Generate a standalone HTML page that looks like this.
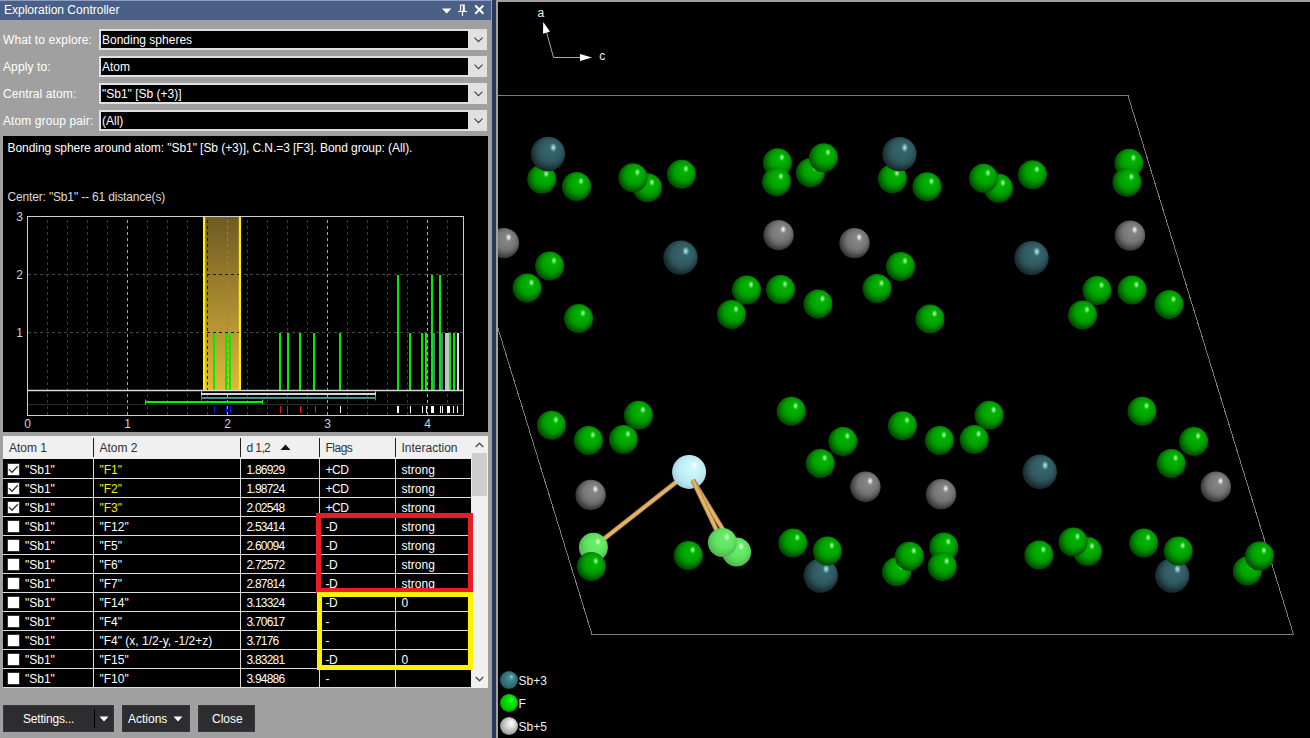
<!DOCTYPE html>
<html><head><meta charset="utf-8"><title>Exploration Controller</title>
<style>
html,body{margin:0;padding:0}
body{width:1310px;height:738px;overflow:hidden;background:#a0a0a0;position:relative;font-family:"Liberation Sans",sans-serif;font-size:12px;color:#fff}
div,span{box-sizing:border-box}
.abs{position:absolute}
#title{position:absolute;left:0;top:0;width:492px;height:20px;background:#4a5f85;border-top:1px solid #8e9dc5;border-right:1px solid #8e9dc5}
#title .t{position:absolute;left:4px;top:2px;line-height:14px;font-size:12px;color:#fff;white-space:nowrap}
#navy{position:absolute;left:492px;top:0;width:4px;height:738px;background:#283858}
#view{position:absolute;left:496px;top:0;width:814px;height:738px;background:#000;border-left:2px solid #a0a0a0;border-top:2px solid #a0a0a0;overflow:hidden}
svg.scene{position:absolute;left:0;top:0}
.gl{font-family:"Liberation Sans",sans-serif;font-size:12px;fill:#f0f0f0}
.lab{position:absolute;left:3px;letter-spacing:0.1px;line-height:14px;white-space:nowrap;color:#fff}
.combo{position:absolute;left:99px;width:388px;height:21px;background:#e1e1e1}
.combo .in{position:absolute;left:2px;top:2px;width:367px;height:17px;background:#000;color:#fff;line-height:19px;padding-left:1px;white-space:nowrap;overflow:hidden}
.combo svg{position:absolute;left:375px;top:8px}
#desc{position:absolute;left:3px;top:136px;width:485px;height:296px;background:#000}
#desc .t1{position:absolute;left:4.5px;top:5px;line-height:14px;white-space:nowrap;color:#fff;letter-spacing:-0.06px}
#desc .t2{position:absolute;left:4.5px;top:54px;line-height:14px;white-space:nowrap;color:#dcdcdc;letter-spacing:-0.16px}
svg.chart{position:absolute;left:0;top:136px}
.cl{font-family:"Liberation Sans",sans-serif;font-size:12px;fill:#d0d0dc}
#table{position:absolute;left:3px;top:436px;width:485px;height:252px;background:#000;overflow:hidden}
#thead{position:absolute;left:0;top:0;width:485px;height:23px;background:#f0f0f0;color:#303030}
#thead span{position:absolute;top:5px;line-height:14px;white-space:nowrap}
#thead i{position:absolute;top:2px;width:1px;height:19px;background:#202020}
.row{position:absolute;left:0;width:468px;height:19px;border-bottom:1px solid #dcdcdc}
.cb{position:absolute;left:4px;top:3px;width:13px;height:13px;background:#fff;border:1px solid #333}
.cb svg{position:absolute;left:-1px;top:-1px}
.c{position:absolute;top:3px;line-height:14px;white-space:nowrap;color:#fff}
.c1{left:22px}.c2{left:96.5px}.c3{left:243.5px;letter-spacing:-0.8px}.c4{left:322.5px;letter-spacing:-0.4px}.c5{left:398.5px}
.y{color:#f0f000}
.vl{position:absolute;top:23px;width:1px;height:229px;background:#dcdcdc}
#sb{position:absolute;left:468px;top:0;width:17px;height:252px;background:#f0f0f0}
#sb .th{position:absolute;left:1px;top:17px;width:15px;height:43px;background:#cdcdcd}
.hl{position:absolute;border:5px solid}
.btn{position:absolute;top:705px;height:27px;background:#2d2d30;border:1px solid #38383c;color:#fff;line-height:27px;white-space:nowrap}
</style></head><body>
<div id="title"><span class="t">Exploration Controller</span>
<svg class="abs" style="left:440px;top:3px" width="48" height="14" viewBox="440 4 48 14">
<polygon points="442,8.5 451.4,8.5 446.7,13.6" fill="#fff"/>
<path d="M460.5 11 V5 H464.2 V11 M463.3 5 V11 M458 11.5 H467 M462.5 12 V16" fill="none" stroke="#fff" stroke-width="1.2"/>
<path d="M475.3 5.5 L483.4 13.7 M483.4 5.5 L475.3 13.7" fill="none" stroke="#fff" stroke-width="2"/>
</svg></div>
<div id="navy"></div>
<div id="view"><svg class="scene" width="812" height="736" viewBox="498 2 812 736"><defs><radialGradient id="gG" cx="0.5" cy="0.5" r="0.75" fx="0.64" fy="0.32"><stop offset="0" stop-color="#00b800"/><stop offset="0.18" stop-color="#00b200"/><stop offset="0.42" stop-color="#00a000"/><stop offset="0.55" stop-color="#008000"/><stop offset="0.66" stop-color="#005a00"/><stop offset="0.76" stop-color="#003e00"/><stop offset="1" stop-color="#002c00"/></radialGradient><radialGradient id="hG"><stop offset="0" stop-color="#b4ffb4" stop-opacity="1"/><stop offset="0.45" stop-color="#b4ffb4" stop-opacity="0.55"/><stop offset="1" stop-color="#b4ffb4" stop-opacity="0"/></radialGradient><radialGradient id="gT" cx="0.5" cy="0.5" r="0.75" fx="0.64" fy="0.32"><stop offset="0" stop-color="#386870"/><stop offset="0.18" stop-color="#36646c"/><stop offset="0.42" stop-color="#305a61"/><stop offset="0.55" stop-color="#27484e"/><stop offset="0.66" stop-color="#1b3236"/><stop offset="0.76" stop-color="#132326"/><stop offset="1" stop-color="#0d181a"/></radialGradient><radialGradient id="hT"><stop offset="0" stop-color="#b0f4f4" stop-opacity="1"/><stop offset="0.45" stop-color="#b0f4f4" stop-opacity="0.55"/><stop offset="1" stop-color="#b0f4f4" stop-opacity="0"/></radialGradient><radialGradient id="gS" cx="0.5" cy="0.5" r="0.75" fx="0.64" fy="0.32"><stop offset="0" stop-color="#888888"/><stop offset="0.18" stop-color="#838383"/><stop offset="0.42" stop-color="#767676"/><stop offset="0.55" stop-color="#5f5f5f"/><stop offset="0.66" stop-color="#424242"/><stop offset="0.76" stop-color="#2e2e2e"/><stop offset="1" stop-color="#202020"/></radialGradient><radialGradient id="hS"><stop offset="0" stop-color="#ffffff" stop-opacity="1"/><stop offset="0.45" stop-color="#ffffff" stop-opacity="0.55"/><stop offset="1" stop-color="#ffffff" stop-opacity="0"/></radialGradient><radialGradient id="gL" cx="0.5" cy="0.5" r="0.75" fx="0.64" fy="0.32"><stop offset="0" stop-color="#68f068"/><stop offset="0.18" stop-color="#66ed66"/><stop offset="0.42" stop-color="#62e462"/><stop offset="0.55" stop-color="#5bd35b"/><stop offset="0.66" stop-color="#53c053"/><stop offset="0.76" stop-color="#4aac4a"/><stop offset="1" stop-color="#429942"/></radialGradient><radialGradient id="hL"><stop offset="0" stop-color="#f0fff0" stop-opacity="1"/><stop offset="0.45" stop-color="#f0fff0" stop-opacity="0.55"/><stop offset="1" stop-color="#f0fff0" stop-opacity="0"/></radialGradient><radialGradient id="gC" cx="0.5" cy="0.5" r="0.75" fx="0.64" fy="0.32"><stop offset="0" stop-color="#d4fcfc"/><stop offset="0.3" stop-color="#c8f4f8"/><stop offset="0.55" stop-color="#b8e8f0"/><stop offset="0.75" stop-color="#a0d0dc"/><stop offset="1" stop-color="#88b8c4"/></radialGradient><radialGradient id="hC"><stop offset="0" stop-color="#ffffff" stop-opacity="1"/><stop offset="0.45" stop-color="#ffffff" stop-opacity="0.55"/><stop offset="1" stop-color="#ffffff" stop-opacity="0"/></radialGradient><radialGradient id="gLT" cx="0.5" cy="0.5" r="0.62" fx="0.66" fy="0.3"><stop offset="0" stop-color="#c0ffff"/><stop offset="0.1" stop-color="#5aa8ac"/><stop offset="0.3" stop-color="#3c868c"/><stop offset="0.7" stop-color="#30686e"/><stop offset="1" stop-color="#1c4448"/></radialGradient><radialGradient id="gLG" cx="0.5" cy="0.5" r="0.62" fx="0.66" fy="0.3"><stop offset="0" stop-color="#a0ffa0"/><stop offset="0.1" stop-color="#30ff30"/><stop offset="0.3" stop-color="#00ec00"/><stop offset="0.7" stop-color="#00c400"/><stop offset="1" stop-color="#007000"/></radialGradient><radialGradient id="gLS" cx="0.5" cy="0.5" r="0.62" fx="0.66" fy="0.3"><stop offset="0" stop-color="#ffffff"/><stop offset="0.15" stop-color="#f4f4f4"/><stop offset="0.4" stop-color="#d8d8d8"/><stop offset="0.75" stop-color="#a8a8a8"/><stop offset="1" stop-color="#606060"/></radialGradient><linearGradient id="gband" x1="0" y1="0" x2="0" y2="1"><stop offset="0" stop-color="#6e5a22"/><stop offset="1" stop-color="#e0b83c"/></linearGradient></defs><polyline points="426.5,95.5 1128,95.5 1293.5,634.5 592,634.5 426.5,95.5" fill="none" stroke="#7c7c7c" stroke-width="1" shape-rendering="crispEdges"/><circle cx="541.7" cy="179.3" r="14.5" fill="url(#gG)"/><ellipse cx="546.2" cy="173.8" rx="2.9" ry="3.9" fill="url(#hG)"/><circle cx="548.0" cy="154.0" r="17.2" fill="url(#gT)"/><ellipse cx="553.3" cy="147.5" rx="3.4" ry="4.6" fill="url(#hT)"/><circle cx="576.5" cy="186.6" r="14.5" fill="url(#gG)"/><ellipse cx="581.0" cy="181.1" rx="2.9" ry="3.9" fill="url(#hG)"/><circle cx="647.4" cy="187.8" r="14.5" fill="url(#gG)"/><ellipse cx="651.9" cy="182.3" rx="2.9" ry="3.9" fill="url(#hG)"/><circle cx="632.9" cy="177.8" r="14.5" fill="url(#gG)"/><ellipse cx="637.4" cy="172.3" rx="2.9" ry="3.9" fill="url(#hG)"/><circle cx="681.4" cy="174.3" r="14.5" fill="url(#gG)"/><ellipse cx="685.9" cy="168.8" rx="2.9" ry="3.9" fill="url(#hG)"/><circle cx="777.4" cy="162.8" r="14.5" fill="url(#gG)"/><ellipse cx="781.9" cy="157.3" rx="2.9" ry="3.9" fill="url(#hG)"/><circle cx="776.4" cy="181.8" r="14.5" fill="url(#gG)"/><ellipse cx="780.9" cy="176.3" rx="2.9" ry="3.9" fill="url(#hG)"/><circle cx="810.4" cy="172.8" r="14.5" fill="url(#gG)"/><ellipse cx="814.9" cy="167.3" rx="2.9" ry="3.9" fill="url(#hG)"/><circle cx="823.4" cy="157.8" r="14.5" fill="url(#gG)"/><ellipse cx="827.9" cy="152.3" rx="2.9" ry="3.9" fill="url(#hG)"/><circle cx="892.4" cy="178.8" r="14.5" fill="url(#gG)"/><ellipse cx="896.9" cy="173.3" rx="2.9" ry="3.9" fill="url(#hG)"/><circle cx="899.4" cy="154.1" r="17.2" fill="url(#gT)"/><ellipse cx="904.7" cy="147.6" rx="3.4" ry="4.6" fill="url(#hT)"/><circle cx="926.9" cy="186.8" r="14.5" fill="url(#gG)"/><ellipse cx="931.4" cy="181.3" rx="2.9" ry="3.9" fill="url(#hG)"/><circle cx="998.4" cy="188.3" r="14.5" fill="url(#gG)"/><ellipse cx="1002.9" cy="182.8" rx="2.9" ry="3.9" fill="url(#hG)"/><circle cx="983.4" cy="178.3" r="14.5" fill="url(#gG)"/><ellipse cx="987.9" cy="172.8" rx="2.9" ry="3.9" fill="url(#hG)"/><circle cx="1032.4" cy="174.8" r="14.5" fill="url(#gG)"/><ellipse cx="1036.9" cy="169.3" rx="2.9" ry="3.9" fill="url(#hG)"/><circle cx="1128.9" cy="163.3" r="14.5" fill="url(#gG)"/><ellipse cx="1133.4" cy="157.8" rx="2.9" ry="3.9" fill="url(#hG)"/><circle cx="1126.9" cy="182.3" r="14.5" fill="url(#gG)"/><ellipse cx="1131.4" cy="176.8" rx="2.9" ry="3.9" fill="url(#hG)"/><circle cx="503.9" cy="243.1" r="15.2" fill="url(#gS)"/><ellipse cx="508.6" cy="237.3" rx="3.0" ry="4.1" fill="url(#hS)"/><circle cx="549.5" cy="266.1" r="14.5" fill="url(#gG)"/><ellipse cx="554.0" cy="260.6" rx="2.9" ry="3.9" fill="url(#hG)"/><circle cx="527.0" cy="288.1" r="14.5" fill="url(#gG)"/><ellipse cx="531.5" cy="282.6" rx="2.9" ry="3.9" fill="url(#hG)"/><circle cx="578.5" cy="318.6" r="14.5" fill="url(#gG)"/><ellipse cx="583.0" cy="313.1" rx="2.9" ry="3.9" fill="url(#hG)"/><circle cx="680.5" cy="257.6" r="17.2" fill="url(#gT)"/><ellipse cx="685.8" cy="251.1" rx="3.4" ry="4.6" fill="url(#hT)"/><circle cx="778.5" cy="235.1" r="15.2" fill="url(#gS)"/><ellipse cx="783.2" cy="229.3" rx="3.0" ry="4.1" fill="url(#hS)"/><circle cx="854.5" cy="243.1" r="15.2" fill="url(#gS)"/><ellipse cx="859.2" cy="237.3" rx="3.0" ry="4.1" fill="url(#hS)"/><circle cx="746.5" cy="290.1" r="14.5" fill="url(#gG)"/><ellipse cx="751.0" cy="284.6" rx="2.9" ry="3.9" fill="url(#hG)"/><circle cx="731.5" cy="314.6" r="14.5" fill="url(#gG)"/><ellipse cx="736.0" cy="309.1" rx="2.9" ry="3.9" fill="url(#hG)"/><circle cx="780.5" cy="289.6" r="14.5" fill="url(#gG)"/><ellipse cx="785.0" cy="284.1" rx="2.9" ry="3.9" fill="url(#hG)"/><circle cx="818.0" cy="304.1" r="14.5" fill="url(#gG)"/><ellipse cx="822.5" cy="298.6" rx="2.9" ry="3.9" fill="url(#hG)"/><circle cx="877.0" cy="288.6" r="14.5" fill="url(#gG)"/><ellipse cx="881.5" cy="283.1" rx="2.9" ry="3.9" fill="url(#hG)"/><circle cx="900.5" cy="266.4" r="14.5" fill="url(#gG)"/><ellipse cx="905.0" cy="260.9" rx="2.9" ry="3.9" fill="url(#hG)"/><circle cx="930.0" cy="319.1" r="14.5" fill="url(#gG)"/><ellipse cx="934.5" cy="313.6" rx="2.9" ry="3.9" fill="url(#hG)"/><circle cx="1031.5" cy="258.1" r="17.2" fill="url(#gT)"/><ellipse cx="1036.8" cy="251.6" rx="3.4" ry="4.6" fill="url(#hT)"/><circle cx="1130.0" cy="235.6" r="15.2" fill="url(#gS)"/><ellipse cx="1134.7" cy="229.8" rx="3.0" ry="4.1" fill="url(#hS)"/><circle cx="1097.0" cy="290.6" r="14.5" fill="url(#gG)"/><ellipse cx="1101.5" cy="285.1" rx="2.9" ry="3.9" fill="url(#hG)"/><circle cx="1082.5" cy="315.1" r="14.5" fill="url(#gG)"/><ellipse cx="1087.0" cy="309.6" rx="2.9" ry="3.9" fill="url(#hG)"/><circle cx="1132.0" cy="290.1" r="14.5" fill="url(#gG)"/><ellipse cx="1136.5" cy="284.6" rx="2.9" ry="3.9" fill="url(#hG)"/><circle cx="1169.0" cy="304.6" r="14.5" fill="url(#gG)"/><ellipse cx="1173.5" cy="299.1" rx="2.9" ry="3.9" fill="url(#hG)"/><circle cx="551.4" cy="425.3" r="14.5" fill="url(#gG)"/><ellipse cx="555.9" cy="419.8" rx="2.9" ry="3.9" fill="url(#hG)"/><circle cx="588.4" cy="440.4" r="14.5" fill="url(#gG)"/><ellipse cx="592.9" cy="434.9" rx="2.9" ry="3.9" fill="url(#hG)"/><circle cx="623.4" cy="439.4" r="14.5" fill="url(#gG)"/><ellipse cx="627.9" cy="433.9" rx="2.9" ry="3.9" fill="url(#hG)"/><circle cx="638.4" cy="415.3" r="14.5" fill="url(#gG)"/><ellipse cx="642.9" cy="409.8" rx="2.9" ry="3.9" fill="url(#hG)"/><circle cx="791.1" cy="411.3" r="14.5" fill="url(#gG)"/><ellipse cx="795.6" cy="405.8" rx="2.9" ry="3.9" fill="url(#hG)"/><circle cx="842.8" cy="441.4" r="14.5" fill="url(#gG)"/><ellipse cx="847.3" cy="435.9" rx="2.9" ry="3.9" fill="url(#hG)"/><circle cx="820.2" cy="463.4" r="14.5" fill="url(#gG)"/><ellipse cx="824.7" cy="457.9" rx="2.9" ry="3.9" fill="url(#hG)"/><circle cx="902.4" cy="425.7" r="14.5" fill="url(#gG)"/><ellipse cx="906.9" cy="420.2" rx="2.9" ry="3.9" fill="url(#hG)"/><circle cx="939.4" cy="440.4" r="14.5" fill="url(#gG)"/><ellipse cx="943.9" cy="434.9" rx="2.9" ry="3.9" fill="url(#hG)"/><circle cx="974.1" cy="439.4" r="14.5" fill="url(#gG)"/><ellipse cx="978.6" cy="433.9" rx="2.9" ry="3.9" fill="url(#hG)"/><circle cx="989.1" cy="415.3" r="14.5" fill="url(#gG)"/><ellipse cx="993.6" cy="409.8" rx="2.9" ry="3.9" fill="url(#hG)"/><circle cx="1142.0" cy="411.3" r="14.5" fill="url(#gG)"/><ellipse cx="1146.5" cy="405.8" rx="2.9" ry="3.9" fill="url(#hG)"/><circle cx="1193.6" cy="441.4" r="14.5" fill="url(#gG)"/><ellipse cx="1198.1" cy="435.9" rx="2.9" ry="3.9" fill="url(#hG)"/><circle cx="1171.1" cy="463.4" r="14.5" fill="url(#gG)"/><ellipse cx="1175.6" cy="457.9" rx="2.9" ry="3.9" fill="url(#hG)"/><circle cx="590.6" cy="494.9" r="15.2" fill="url(#gS)"/><ellipse cx="595.3" cy="489.1" rx="3.0" ry="4.1" fill="url(#hS)"/><circle cx="865.4" cy="486.8" r="15.2" fill="url(#gS)"/><ellipse cx="870.1" cy="481.0" rx="3.0" ry="4.1" fill="url(#hS)"/><circle cx="941.0" cy="494.3" r="15.2" fill="url(#gS)"/><ellipse cx="945.7" cy="488.5" rx="3.0" ry="4.1" fill="url(#hS)"/><circle cx="1215.8" cy="486.8" r="15.2" fill="url(#gS)"/><ellipse cx="1220.5" cy="481.0" rx="3.0" ry="4.1" fill="url(#hS)"/><circle cx="1039.8" cy="471.8" r="17.2" fill="url(#gT)"/><ellipse cx="1045.1" cy="465.3" rx="3.4" ry="4.6" fill="url(#hT)"/><circle cx="820.8" cy="575.5" r="17.2" fill="url(#gT)"/><ellipse cx="826.1" cy="569.0" rx="3.4" ry="4.6" fill="url(#hT)"/><circle cx="1172.2" cy="575.5" r="17.2" fill="url(#gT)"/><ellipse cx="1177.5" cy="569.0" rx="3.4" ry="4.6" fill="url(#hT)"/><circle cx="688.2" cy="555.4" r="14.5" fill="url(#gG)"/><ellipse cx="692.7" cy="549.9" rx="2.9" ry="3.9" fill="url(#hG)"/><circle cx="792.8" cy="543.0" r="14.5" fill="url(#gG)"/><ellipse cx="797.3" cy="537.5" rx="2.9" ry="3.9" fill="url(#hG)"/><circle cx="827.3" cy="551.0" r="14.5" fill="url(#gG)"/><ellipse cx="831.8" cy="545.5" rx="2.9" ry="3.9" fill="url(#hG)"/><circle cx="896.6" cy="571.8" r="14.5" fill="url(#gG)"/><ellipse cx="901.1" cy="566.3" rx="2.9" ry="3.9" fill="url(#hG)"/><circle cx="909.3" cy="556.3" r="14.5" fill="url(#gG)"/><ellipse cx="913.8" cy="550.8" rx="2.9" ry="3.9" fill="url(#hG)"/><circle cx="943.7" cy="547.1" r="14.5" fill="url(#gG)"/><ellipse cx="948.2" cy="541.6" rx="2.9" ry="3.9" fill="url(#hG)"/><circle cx="942.2" cy="566.6" r="14.5" fill="url(#gG)"/><ellipse cx="946.7" cy="561.1" rx="2.9" ry="3.9" fill="url(#hG)"/><circle cx="1038.8" cy="555.0" r="14.5" fill="url(#gG)"/><ellipse cx="1043.3" cy="549.5" rx="2.9" ry="3.9" fill="url(#hG)"/><circle cx="1087.5" cy="551.5" r="14.5" fill="url(#gG)"/><ellipse cx="1092.0" cy="546.0" rx="2.9" ry="3.9" fill="url(#hG)"/><circle cx="1073.0" cy="542.0" r="14.5" fill="url(#gG)"/><ellipse cx="1077.5" cy="536.5" rx="2.9" ry="3.9" fill="url(#hG)"/><circle cx="1143.6" cy="543.0" r="14.5" fill="url(#gG)"/><ellipse cx="1148.1" cy="537.5" rx="2.9" ry="3.9" fill="url(#hG)"/><circle cx="1178.2" cy="551.0" r="14.5" fill="url(#gG)"/><ellipse cx="1182.7" cy="545.5" rx="2.9" ry="3.9" fill="url(#hG)"/><circle cx="1247.4" cy="571.0" r="14.5" fill="url(#gG)"/><ellipse cx="1251.9" cy="565.5" rx="2.9" ry="3.9" fill="url(#hG)"/><circle cx="1259.4" cy="556.0" r="14.5" fill="url(#gG)"/><ellipse cx="1263.9" cy="550.5" rx="2.9" ry="3.9" fill="url(#hG)"/><line x1="689" y1="472" x2="593.4" y2="547.2" stroke="#a88048" stroke-width="4.8"/><line x1="689" y1="472" x2="593.4" y2="547.2" stroke="#e4b468" stroke-width="3.0"/><circle cx="593.4" cy="547.2" r="14.5" fill="url(#gL)"/><ellipse cx="597.9" cy="541.7" rx="2.9" ry="3.9" fill="url(#hL)"/><circle cx="591.3" cy="566.5" r="14.5" fill="url(#gG)"/><ellipse cx="595.8" cy="561.0" rx="2.9" ry="3.9" fill="url(#hG)"/><circle cx="689.1" cy="471.9" r="17" fill="url(#gC)"/><ellipse cx="694.4" cy="465.4" rx="3.4" ry="4.6" fill="url(#hC)"/><line x1="692.8" y1="480.1" x2="736.6" y2="552" stroke="#a88048" stroke-width="4.8"/><line x1="692.8" y1="480.1" x2="736.6" y2="552" stroke="#e4b468" stroke-width="3.0"/><line x1="692.8" y1="480.1" x2="722.4" y2="542.4" stroke="#a88048" stroke-width="4.8"/><line x1="692.8" y1="480.1" x2="722.4" y2="542.4" stroke="#e4b468" stroke-width="3.0"/><circle cx="736.6" cy="552.0" r="14.5" fill="url(#gL)"/><ellipse cx="741.1" cy="546.5" rx="2.9" ry="3.9" fill="url(#hL)"/><circle cx="722.4" cy="542.4" r="14.5" fill="url(#gL)"/><ellipse cx="726.9" cy="536.9" rx="2.9" ry="3.9" fill="url(#hL)"/><g stroke="#a8a8a8" stroke-width="1" fill="#ffffff"><line x1="553.5" y1="57.5" x2="546" y2="30"/><line x1="553.5" y1="57.5" x2="584" y2="57.5"/><polygon points="543.2,22 550,31.5 543,33.8" stroke="none"/><polygon points="592,57.5 580,54 580,61" stroke="none"/></g><text x="537.5" y="17" class="gl">a</text><text x="599.3" y="60" class="gl">c</text><circle cx="509" cy="680" r="9" fill="url(#gLT)"/><circle cx="509" cy="703" r="9" fill="url(#gLG)"/><circle cx="509" cy="726" r="9" fill="url(#gLS)"/><text x="518.5" y="685" class="gl">Sb+3</text><text x="518.5" y="708" class="gl">F</text><text x="518.5" y="731" class="gl">Sb+5</text></svg></div>
<div class="lab" style="top:33px">What to explore:</div><div class="combo" style="top:29px"><div class="in">Bonding spheres</div><svg width="9" height="6" viewBox="0 0 9 6"><path d="M0.5 0.7 L4.5 4.7 L8.5 0.7" fill="none" stroke="#404040" stroke-width="1.1"/></svg></div>
<div class="lab" style="top:60px">Apply to:</div><div class="combo" style="top:56px"><div class="in">Atom</div><svg width="9" height="6" viewBox="0 0 9 6"><path d="M0.5 0.7 L4.5 4.7 L8.5 0.7" fill="none" stroke="#404040" stroke-width="1.1"/></svg></div>
<div class="lab" style="top:87px">Central atom:</div><div class="combo" style="top:83px"><div class="in">"Sb1" [Sb (+3)]</div><svg width="9" height="6" viewBox="0 0 9 6"><path d="M0.5 0.7 L4.5 4.7 L8.5 0.7" fill="none" stroke="#404040" stroke-width="1.1"/></svg></div>
<div class="lab" style="top:114px">Atom group pair:</div><div class="combo" style="top:110px"><div class="in">(All)</div><svg width="9" height="6" viewBox="0 0 9 6"><path d="M0.5 0.7 L4.5 4.7 L8.5 0.7" fill="none" stroke="#404040" stroke-width="1.1"/></svg></div>
<div id="desc"><div class="t1">Bonding sphere around atom: "Sb1" [Sb (+3)], C.N.=3 [F3]. Bond group: (All).</div><div class="t2">Center: "Sb1" -- 61 distance(s)</div></div>
<svg class="chart" width="492" height="300" viewBox="0 136 492 300"><line x1="47.5" y1="217" x2="47.5" y2="415" stroke="#3c3c3c" stroke-width="1" stroke-dasharray="3,3" stroke-dashoffset="3"/><line x1="67.5" y1="217" x2="67.5" y2="415" stroke="#3c3c3c" stroke-width="1" stroke-dasharray="3,3" stroke-dashoffset="3"/><line x1="87.5" y1="217" x2="87.5" y2="415" stroke="#3c3c3c" stroke-width="1" stroke-dasharray="3,3" stroke-dashoffset="3"/><line x1="107.5" y1="217" x2="107.5" y2="415" stroke="#3c3c3c" stroke-width="1" stroke-dasharray="3,3" stroke-dashoffset="3"/><line x1="127.5" y1="217" x2="127.5" y2="415" stroke="#a8a8a8" stroke-width="1" stroke-dasharray="3,3" stroke-dashoffset="3"/><line x1="147.5" y1="217" x2="147.5" y2="415" stroke="#3c3c3c" stroke-width="1" stroke-dasharray="3,3" stroke-dashoffset="3"/><line x1="167.5" y1="217" x2="167.5" y2="415" stroke="#3c3c3c" stroke-width="1" stroke-dasharray="3,3" stroke-dashoffset="3"/><line x1="187.5" y1="217" x2="187.5" y2="415" stroke="#3c3c3c" stroke-width="1" stroke-dasharray="3,3" stroke-dashoffset="3"/><line x1="207.5" y1="217" x2="207.5" y2="415" stroke="#3c3c3c" stroke-width="1" stroke-dasharray="3,3" stroke-dashoffset="3"/><line x1="227.5" y1="217" x2="227.5" y2="415" stroke="#a8a8a8" stroke-width="1" stroke-dasharray="3,3" stroke-dashoffset="3"/><line x1="247.5" y1="217" x2="247.5" y2="415" stroke="#3c3c3c" stroke-width="1" stroke-dasharray="3,3" stroke-dashoffset="3"/><line x1="267.5" y1="217" x2="267.5" y2="415" stroke="#3c3c3c" stroke-width="1" stroke-dasharray="3,3" stroke-dashoffset="3"/><line x1="287.5" y1="217" x2="287.5" y2="415" stroke="#3c3c3c" stroke-width="1" stroke-dasharray="3,3" stroke-dashoffset="3"/><line x1="307.5" y1="217" x2="307.5" y2="415" stroke="#3c3c3c" stroke-width="1" stroke-dasharray="3,3" stroke-dashoffset="3"/><line x1="327.5" y1="217" x2="327.5" y2="415" stroke="#a8a8a8" stroke-width="1" stroke-dasharray="3,3" stroke-dashoffset="3"/><line x1="347.5" y1="217" x2="347.5" y2="415" stroke="#3c3c3c" stroke-width="1" stroke-dasharray="3,3" stroke-dashoffset="3"/><line x1="367.5" y1="217" x2="367.5" y2="415" stroke="#3c3c3c" stroke-width="1" stroke-dasharray="3,3" stroke-dashoffset="3"/><line x1="387.5" y1="217" x2="387.5" y2="415" stroke="#3c3c3c" stroke-width="1" stroke-dasharray="3,3" stroke-dashoffset="3"/><line x1="407.5" y1="217" x2="407.5" y2="415" stroke="#3c3c3c" stroke-width="1" stroke-dasharray="3,3" stroke-dashoffset="3"/><line x1="427.5" y1="217" x2="427.5" y2="415" stroke="#a8a8a8" stroke-width="1" stroke-dasharray="3,3" stroke-dashoffset="3"/><line x1="447.5" y1="217" x2="447.5" y2="415" stroke="#3c3c3c" stroke-width="1" stroke-dasharray="3,3" stroke-dashoffset="3"/><line x1="28" y1="332.5" x2="463" y2="332.5" stroke="#484848" stroke-width="1" stroke-dasharray="3,3"/><line x1="28" y1="274.5" x2="463" y2="274.5" stroke="#484848" stroke-width="1" stroke-dasharray="3,3"/><rect x="203" y="217" width="38" height="173" fill="url(#gband)"/><rect x="203" y="217" width="2.2" height="173" fill="#fff000"/><rect x="238.8" y="217" width="2.2" height="173" fill="#fff000"/><line x1="207.5" y1="217" x2="207.5" y2="390" stroke="#1c1808" stroke-width="1" stroke-dasharray="3,3" stroke-dashoffset="3"/><line x1="227.5" y1="217" x2="227.5" y2="390" stroke="#8c8670" stroke-width="1" stroke-dasharray="3,3" stroke-dashoffset="3"/><line x1="207" y1="332.5" x2="238.8" y2="332.5" stroke="#1c1808" stroke-width="1" stroke-dasharray="3,3"/><line x1="207" y1="274.5" x2="238.8" y2="274.5" stroke="#1c1808" stroke-width="1" stroke-dasharray="3,3"/><rect x="213" y="333.0" width="2" height="57.0" fill="#00ee00"/><rect x="225" y="333.0" width="2" height="57.0" fill="#00ee00"/><rect x="229" y="333.0" width="2" height="57.0" fill="#00ee00"/><rect x="279" y="333.0" width="2" height="57.0" fill="#00ee00"/><rect x="287" y="333.0" width="2" height="57.0" fill="#00ee00"/><rect x="299" y="333.0" width="2" height="57.0" fill="#00ee00"/><rect x="313" y="333.0" width="2" height="57.0" fill="#00ee00"/><rect x="339" y="333.0" width="2" height="57.0" fill="#00ee00"/><rect x="397" y="275.0" width="2" height="115.0" fill="#00ee00"/><rect x="409" y="333.0" width="2" height="57.0" fill="#00ee00"/><rect x="421" y="333.0" width="2" height="57.0" fill="#00ee00"/><rect x="425" y="333.0" width="2" height="57.0" fill="#00ee00"/><rect x="431" y="275.0" width="2" height="115.0" fill="#00ee00"/><rect x="433" y="333.0" width="2" height="57.0" fill="#4a8494"/><rect x="439" y="275.0" width="2" height="115.0" fill="#00ee00"/><rect x="441" y="333.0" width="2" height="57.0" fill="#4a8494"/><rect x="445" y="333.0" width="4" height="57.0" fill="#c4c4c4"/><rect x="449" y="333.0" width="2" height="57.0" fill="#00ee00"/><rect x="453" y="333.0" width="2" height="57.0" fill="#00ee00"/><rect x="457" y="333.0" width="2" height="57.0" fill="#e0e0e0"/><rect x="27.5" y="216.5" width="436" height="199" fill="none" stroke="#d0d0d0" stroke-width="1"/><line x1="27" y1="390.5" x2="464" y2="390.5" stroke="#d8d8d8" stroke-width="1.4"/><line x1="28" y1="404.5" x2="463" y2="404.5" stroke="#2c2c2c" stroke-width="1"/><line x1="201.5" y1="394" x2="375.5" y2="394" stroke="#d8d8d8" stroke-width="2"/><line x1="201.5" y1="391.5" x2="201.5" y2="396.5" stroke="#d8d8d8" stroke-width="1"/><line x1="375.5" y1="391.5" x2="375.5" y2="396.5" stroke="#d8d8d8" stroke-width="1"/><line x1="201.5" y1="398" x2="375.5" y2="398" stroke="#4a8c8c" stroke-width="2"/><line x1="201.5" y1="395.5" x2="201.5" y2="400.5" stroke="#4a8c8c" stroke-width="1"/><line x1="375.5" y1="395.5" x2="375.5" y2="400.5" stroke="#4a8c8c" stroke-width="1"/><line x1="145.5" y1="402" x2="262.5" y2="402" stroke="#00f400" stroke-width="2"/><line x1="145.5" y1="399.5" x2="145.5" y2="404.5" stroke="#00f400" stroke-width="1"/><line x1="262.5" y1="399.5" x2="262.5" y2="404.5" stroke="#00f400" stroke-width="1"/><rect x="214.0" y="406" width="1" height="7" fill="#1010ff"/><rect x="226.0" y="406" width="1" height="7" fill="#1010ff"/><rect x="230.0" y="406" width="1" height="7" fill="#1010ff"/><rect x="280.0" y="406" width="1" height="7" fill="#ff1010"/><rect x="287.0" y="406" width="1" height="7" fill="#ff1010"/><rect x="300.0" y="406" width="1" height="7" fill="#ff1010"/><rect x="315.0" y="406" width="1" height="7" fill="#ff1010"/><rect x="340.0" y="406" width="1" height="7" fill="#ffffff"/><rect x="397.0" y="406" width="2" height="7" fill="#ffffff"/><rect x="410.0" y="406" width="1" height="7" fill="#ffffff"/><rect x="422.0" y="406" width="1" height="7" fill="#ffffff"/><rect x="426.0" y="406" width="1" height="7" fill="#ffffff"/><rect x="431.0" y="406" width="3" height="7" fill="#ffffff"/><rect x="440.0" y="406" width="1" height="7" fill="#ffffff"/><rect x="442.0" y="406" width="1" height="7" fill="#ffffff"/><rect x="447.0" y="406" width="3" height="7" fill="#ffffff"/><rect x="453.0" y="406" width="1" height="7" fill="#ffffff"/><rect x="457.0" y="406" width="1" height="7" fill="#ffffff"/><text x="23" y="221.2" text-anchor="end" class="cl">3</text><text x="23" y="279" text-anchor="end" class="cl">2</text><text x="23" y="337" text-anchor="end" class="cl">1</text><text x="27.5" y="428" text-anchor="middle" class="cl">0</text><text x="127.5" y="428" text-anchor="middle" class="cl">1</text><text x="227.5" y="428" text-anchor="middle" class="cl">2</text><text x="327.5" y="428" text-anchor="middle" class="cl">3</text><text x="427.5" y="428" text-anchor="middle" class="cl">4</text></svg>
<div id="table">
<div id="thead"><span style="left:6px">Atom 1</span><span style="left:96.5px">Atom 2</span><span style="left:243.5px;letter-spacing:-0.6px">d 1,2</span><span style="left:322.5px;letter-spacing:-0.5px">Flags</span><span style="left:398.5px">Interaction</span>
<i style="left:90px"></i><i style="left:237px"></i><i style="left:316px"></i><i style="left:392px"></i>
<svg class="abs" style="left:277px;top:8px" width="11" height="6" viewBox="0 0 11 6"><polygon points="0.5,6 5.5,0.5 10.5,6" fill="#101010"/></svg>
</div>
<div class="row" style="top:24px"><span class="cb"><svg width="13" height="13" viewBox="0 0 13 13"><path d="M1.9 6.1 L5 9.3 L10.8 3.2" fill="none" stroke="#333" stroke-width="1.3"/></svg></span><span class="c c1">"Sb1"</span><span class="c c2 y">"F1"</span><span class="c c3">1.86929</span><span class="c c4">+CD</span><span class="c c5">strong</span></div><div class="row" style="top:43px"><span class="cb"><svg width="13" height="13" viewBox="0 0 13 13"><path d="M1.9 6.1 L5 9.3 L10.8 3.2" fill="none" stroke="#333" stroke-width="1.3"/></svg></span><span class="c c1">"Sb1"</span><span class="c c2 y">"F2"</span><span class="c c3">1.98724</span><span class="c c4">+CD</span><span class="c c5">strong</span></div><div class="row" style="top:62px"><span class="cb"><svg width="13" height="13" viewBox="0 0 13 13"><path d="M1.9 6.1 L5 9.3 L10.8 3.2" fill="none" stroke="#333" stroke-width="1.3"/></svg></span><span class="c c1">"Sb1"</span><span class="c c2 y">"F3"</span><span class="c c3">2.02548</span><span class="c c4">+CD</span><span class="c c5">strong</span></div><div class="row" style="top:81px"><span class="cb"></span><span class="c c1">"Sb1"</span><span class="c c2">"F12"</span><span class="c c3">2.53414</span><span class="c c4">-D</span><span class="c c5">strong</span></div><div class="row" style="top:100px"><span class="cb"></span><span class="c c1">"Sb1"</span><span class="c c2">"F5"</span><span class="c c3">2.60094</span><span class="c c4">-D</span><span class="c c5">strong</span></div><div class="row" style="top:119px"><span class="cb"></span><span class="c c1">"Sb1"</span><span class="c c2">"F6"</span><span class="c c3">2.72572</span><span class="c c4">-D</span><span class="c c5">strong</span></div><div class="row" style="top:138px"><span class="cb"></span><span class="c c1">"Sb1"</span><span class="c c2">"F7"</span><span class="c c3">2.87814</span><span class="c c4">-D</span><span class="c c5">strong</span></div><div class="row" style="top:157px"><span class="cb"></span><span class="c c1">"Sb1"</span><span class="c c2">"F14"</span><span class="c c3">3.13324</span><span class="c c4">-D</span><span class="c c5">0</span></div><div class="row" style="top:176px"><span class="cb"></span><span class="c c1">"Sb1"</span><span class="c c2">"F4"</span><span class="c c3">3.70617</span><span class="c c4">-</span><span class="c c5"></span></div><div class="row" style="top:195px"><span class="cb"></span><span class="c c1">"Sb1"</span><span class="c c2">"F4" (x, 1/2-y, -1/2+z)</span><span class="c c3">3.7176</span><span class="c c4">-</span><span class="c c5"></span></div><div class="row" style="top:214px"><span class="cb"></span><span class="c c1">"Sb1"</span><span class="c c2">"F15"</span><span class="c c3">3.83281</span><span class="c c4">-D</span><span class="c c5">0</span></div><div class="row" style="top:233px"><span class="cb"></span><span class="c c1">"Sb1"</span><span class="c c2">"F10"</span><span class="c c3">3.94886</span><span class="c c4">-</span><span class="c c5"></span></div>
<div class="vl" style="left:90px"></div><div class="vl" style="left:237px"></div><div class="vl" style="left:316px"></div><div class="vl" style="left:392px"></div>
<div id="sb"><div class="th"></div>
<svg class="abs" style="left:4px;top:6px" width="9" height="6" viewBox="0 0 9 6"><path d="M0.7 5 L4.5 1.2 L8.3 5" fill="none" stroke="#505050" stroke-width="1.4"/></svg>
<svg class="abs" style="left:4px;top:240px" width="9" height="6" viewBox="0 0 9 6"><path d="M0.7 1 L4.5 4.8 L8.3 1" fill="none" stroke="#505050" stroke-width="1.4"/></svg>
</div>
</div>
<div class="hl" style="left:316px;top:513px;width:157px;height:80px;border-color:#ed1c24"></div>
<div class="hl" style="left:316.5px;top:592px;width:156px;height:78px;border-color:#fff200"></div>
<div class="btn" style="left:3px;width:111px"><span class="abs" style="left:19px;top:0;letter-spacing:-0.2px">Settings...</span><span class="abs" style="left:90px;top:3px;width:1px;height:19px;background:#000"></span>
<svg class="abs" style="left:95px;top:10px" width="10" height="6" viewBox="0 0 10 6"><polygon points="0.5,0.5 9.5,0.5 5,5.5" fill="#fff"/></svg></div>
<div class="btn" style="left:122px;width:68px"><span class="abs" style="left:5px;top:0">Actions</span>
<svg class="abs" style="left:50px;top:10px" width="10" height="6" viewBox="0 0 10 6"><polygon points="0.5,0.5 9.5,0.5 5,5.5" fill="#fff"/></svg></div>
<div class="btn" style="left:198px;width:57px"><span class="abs" style="left:13px;top:0">Close</span></div>
</body></html>
